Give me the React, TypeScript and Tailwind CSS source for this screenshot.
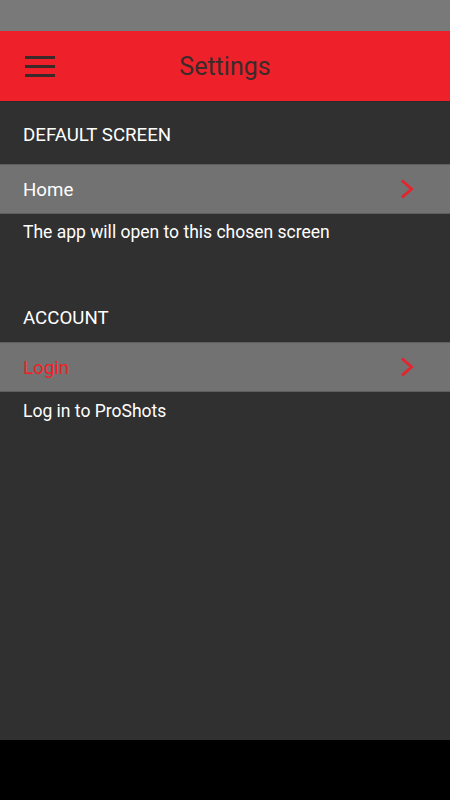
function Chevron() {
  return (
    <svg width="14" height="20" viewBox="0 0 14 20" fill="none">
      <path d="M2 1.5 L11.5 10 L2 18.5" stroke="#e3262e" strokeWidth="3" />
    </svg>
  );
}

function Row({ label, red }: { label: string; red?: boolean }) {
  return (
    <div className="h-[50px] bg-[#727272] border-y border-[#5e5e5e] flex items-center justify-between pl-[23px] pr-[36px]">
      <span className={red ? "pt-[2px] text-[18.7px] text-[#f21d25]" : "pt-[2px] text-[18.7px] text-white"}>{label}</span>
      <Chevron />
    </div>
  );
}

export default function App() {
  return (
    <div className="w-[450px] h-[800px] flex flex-col bg-[#303030]" style={{ fontFamily: "Roboto, 'Noto Sans', sans-serif" }}>
      <div className="h-[31px] bg-[#797979]" />
      <div className="h-[70px] bg-[#ee2029] flex items-center relative">
        <div className="flex flex-col gap-[6px] pl-[25px]">
          <div className="w-[30px] h-[3px] bg-[#3a2a2a]" />
          <div className="w-[30px] h-[3px] bg-[#3a2a2a]" />
          <div className="w-[30px] h-[3px] bg-[#3a2a2a]" />
        </div>
        <div className="absolute inset-0 pt-[2px] flex items-center justify-center text-[25px] text-[#3a2c2c]">Settings</div>
      </div>
      <div className="h-px bg-[#2a2a2a]" />

      <div className="flex-1 flex flex-col">
        <div className="pt-[21px] pb-[16px] pl-[23px] h-[62px] leading-[24px] text-[18.7px] text-white">DEFAULT SCREEN</div>
        <Row label="Home" />
        <div className="mt-[6px] pl-[23px] leading-[24px] text-[17.5px] text-white">The app will open to this chosen screen</div>

        <div className="mt-[62px] pl-[23px] leading-[24px] text-[18.7px] text-white">ACCOUNT</div>
        <div className="h-[12px]" />
        <Row label="Login" red />
        <div className="mt-[7px] pl-[23px] leading-[24px] text-[17.5px] text-white">Log in to ProShots</div>
      </div>

      <div className="h-[60px] bg-black" />
    </div>
  );
}
